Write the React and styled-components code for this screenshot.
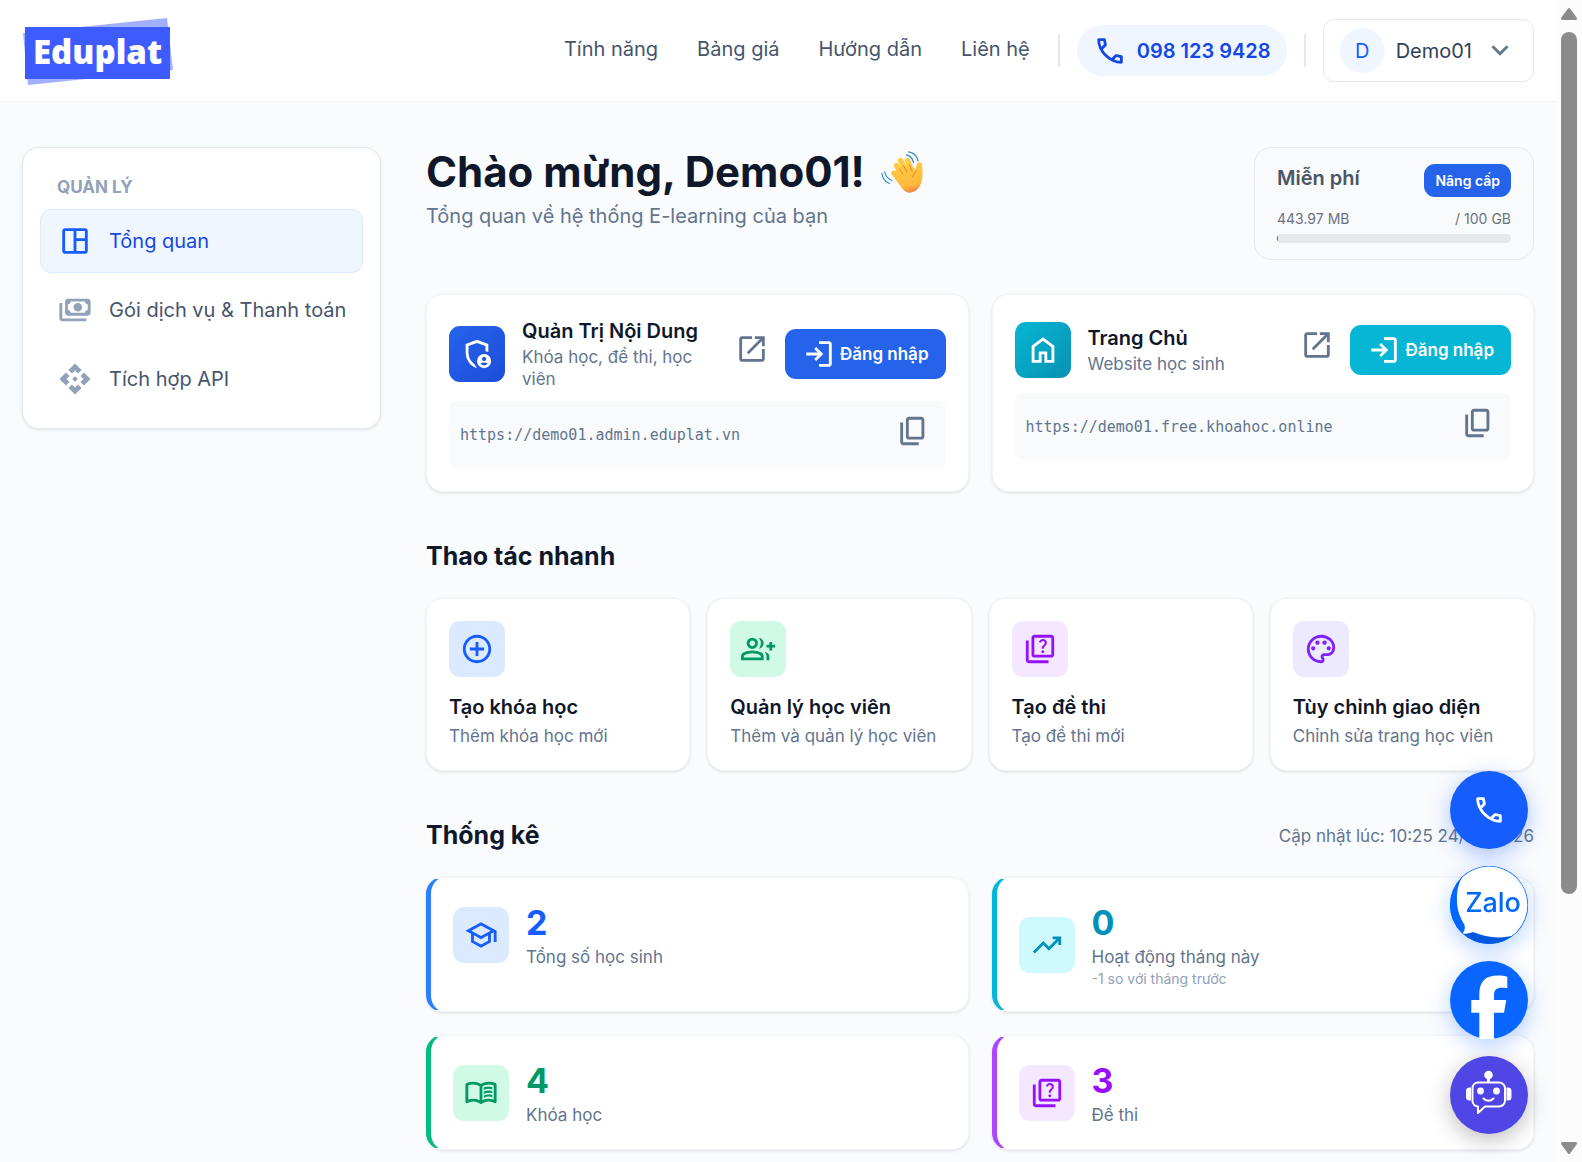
import React from 'react'
import styled, { createGlobalStyle } from 'styled-components'

const GlobalStyle = createGlobalStyle`
  * {
    box-sizing: border-box;
  }

  body {
    margin: 0;
    background: #fafbfd;
    color: #0f172b;
    font-family: Inter, 'Liberation Sans', sans-serif;
    font-size: 17px;
  }

  h1, h2, h3, p {
    margin: 0;
  }

  button {
    font-family: inherit;
    cursor: pointer;
    border: 0;
  }

  a {
    color: inherit;
    text-decoration: none;
  }
`

// Material Symbols outlines, all on the 960 grid
const paths = {
  call: 'M798-120q-125 0-247-54.5T329-329Q229-429 174.5-551T120-798q0-18 12-30t30-12h162q14 0 25 9.5t13 22.5l26 140q2 16-1 27t-11 19l-97 98q20 37 47.5 71.5T387-386q31 31 65 57.5t72 48.5l94-94q9-9 23.5-13.5T670-390l138 28q14 4 23 14.5t9 23.5v162q0 18-12 30t-30 12ZM241-600l66-66-17-94h-89q5 41 14 81t26 79Zm358 358q39 17 79.5 27t81.5 13v-88l-94-19-67 67Z',
  chevron: 'M480-344 240-584l56-56 184 184 184-184 56 56-240 240Z',
  dashboard:
    'M200-120q-33 0-56.5-23.5T120-200v-560q0-33 23.5-56.5T200-840h560q33 0 56.5 23.5T840-760v560q0 33-23.5 56.5T760-120H200Zm0-80h240v-560H200v560Zm320 0h240v-280H520v280Zm0-360h240v-200H520v200Z',
  payments:
    'M560-440q-50 0-85-35t-35-85q0-50 35-85t85-35q50 0 85 35t35 85q0 50-35 85t-85 35ZM280-320q-33 0-56.5-23.5T200-400v-320q0-33 23.5-56.5T280-800h560q33 0 56.5 23.5T920-720v320q0 33-23.5 56.5T840-320H280Zm80-80h400q0-33 23.5-56.5T840-480v-160q-33 0-56.5-23.5T760-720H360q0 33-23.5 56.5T280-640v160q33 0 56.5 23.5T360-400Zm440 240H120q-33 0-56.5-23.5T40-240v-440h80v440h680v80Z',
  api: 'm480-400-80-80 80-80 80 80-80 80Zm-85-235L295-735l185-185 185 185-100 100-85-85-85 85ZM225-295 40-480l185-185 100 100-85 85 85 85-100 100Zm510 0L635-395l85-85-85-85 100-100 185 185-185 185ZM480-40 295-225l100-100 85 85 85-85 100 100L480-40Z',
  admin:
    'M680-280q25 0 42.5-17.5T740-340q0-25-17.5-42.5T680-400q-25 0-42.5 17.5T620-340q0 25 17.5 42.5T680-280Zm0 120q31 0 57-14.5t44-38.5q-23-14-48.5-20.5T680-240q-27 0-52.5 6.5T579-213q18 24 44 38.5t57 14.5ZM480-80q-139-35-229.5-159.5T160-516v-244l320-120 320 120v227q-19-8-39-14.5t-41-9.5v-147l-240-90-240 90v188q0 47 12.5 94t35 89.5Q310-290 342-254t71 60q11 32 29 61t41 52q-1 0-1.5.5t-1.5.5Zm200 0q-83 0-141.5-58.5T480-280q0-83 58.5-141.5T680-480q83 0 141.5 58.5T880-280q0 83-58.5 141.5T680-80Z',
  home: 'M240-200h120v-240h240v240h120v-360L480-740 240-560v360Zm-80 80v-480l320-240 320 240v480H520v-240h-80v240H160Z',
  open: 'M200-120q-33 0-56.5-23.5T120-200v-560q0-33 23.5-56.5T200-840h280v80H200v560h560v-280h80v280q0 33-23.5 56.5T760-120H200Zm188-212-56-56 372-372H560v-80h280v280h-80v-144L388-332Z',
  login:
    'M480-120v-80h280v-560H480v-80h280q33 0 56.5 23.5T840-760v560q0 33-23.5 56.5T760-120H480Zm-80-160-55-58 102-102H120v-80h327L345-622l55-58 200 200-200 200Z',
  copy: 'M360-240q-33 0-56.5-23.5T280-320v-480q0-33 23.5-56.5T360-880h360q33 0 56.5 23.5T800-800v480q0 33-23.5 56.5T720-240H360Zm0-80h360v-480H360v480ZM200-80q-33 0-56.5-23.5T120-160v-560h80v560h440v80H200Z',
  add: 'M440-280h80v-160h160v-80H520v-160h-80v160H280v80h160v160Zm40 200q-83 0-156-31.5T197-197q-54-54-85.5-127T80-480q0-83 31.5-156T197-763q54-54 127-85.5T480-880q83 0 156 31.5T763-763q54 54 85.5 127T880-480q0 83-31.5 156T763-197q-54 54-127 85.5T480-80Zm0-80q134 0 227-93t93-227q0-134-93-227t-227-93q-134 0-227 93t-93 227q0 134 93 227t227 93Z',
  groupAdd:
    'M500-482q29-32 44.5-73t15.5-85q0-44-15.5-85T500-798q60 8 100 53t40 105q0 60-40 105t-100 53Zm220 322v-120q0-36-16-68.5T662-406q51 18 94.5 46.5T800-280v120h-80Zm80-280v-80h-80v-80h80v-80h80v80h80v80h-80v80h-80Zm-480-40q-66 0-113-47t-47-113q0-66 47-113t113-47q66 0 113 47t47 113q0 66-47 113t-113 47ZM0-160v-112q0-34 17.5-62.5T64-378q62-31 126-46.5T320-440q66 0 130 15.5T576-378q29 15 46.5 43.5T640-272v112H0Zm320-400q33 0 56.5-23.5T400-640q0-33-23.5-56.5T320-720q-33 0-56.5 23.5T240-640q0 33 23.5 56.5T320-560ZM80-240h480v-32q0-11-5.5-20T540-306q-54-27-109-40.5T320-360q-56 0-111 13.5T100-306q-9 5-14.5 14T80-272v32Z',
  quiz: 'M560-360q17 0 29.5-12.5T602-402q0-17-12.5-29.5T560-444q-17 0-29.5 12.5T518-402q0 17 12.5 29.5T560-360Zm-30-128h60q0-29 6-42.5t28-35.5q30-30 40-48.5t10-43.5q0-45-31.5-73.5T560-760q-41 0-71.5 23T446-676l54 22q9-25 24.5-37.5T560-704q24 0 39 13.5t15 36.5q0 14-8 26.5T578-596q-33 29-40.5 45.5T530-488ZM320-240q-33 0-56.5-23.5T240-320v-480q0-33 23.5-56.5T320-880h480q33 0 56.5 23.5T880-800v480q0 33-23.5 56.5T800-240H320Zm0-80h480v-480H320v480ZM160-80q-33 0-56.5-23.5T80-160v-560h80v560h560v80H160Z',
  palette:
    'M480-80q-82 0-155-31.5t-127.5-86Q143-252 111.5-325T80-480q0-83 32.5-156t88-127Q256-817 330-848.5T488-880q80 0 151 27.5t124.5 76q53.5 48.5 85 115T880-518q0 115-70 176.5T640-280h-74q-9 0-12.5 5t-3.5 11q0 12 15 34.5t15 51.5q0 50-27.5 74T480-80Zm-177-377q17-17 17-43t-17-43q-17-17-43-17t-43 17q-17 17-17 43t17 43q17 17 43 17t43-17Zm120-160q17-17 17-43t-17-43q-17-17-43-17t-43 17q-17 17-17 43t17 43q17 17 43 17t43-17Zm200 0q17-17 17-43t-17-43q-17-17-43-17t-43 17q-17 17-17 43t17 43q17 17 43 17t43-17Zm120 160q17-17 17-43t-17-43q-17-17-43-17t-43 17q-17 17-17 43t17 43q17 17 43 17t43-17ZM480-160q9 0 14.5-5t5.5-13q0-14-15-33t-15-57q0-42 29-67t71-25h70q66 0 113-38.5T800-518q0-121-92.5-201.5T488-800q-136 0-232 93t-96 227q0 133 93.5 226.5T480-160Z',
  school:
    'M480-120 200-272v-240L40-600l440-240 440 240v320h-80v-276l-80 44v240L480-120Zm0-332 274-148-274-148-274 148 274 148Zm0 241 200-108v-151L480-360 280-470v151l200 108Z',
  trending:
    'm136-240-56-56 296-298 160 160 208-206H640v-80h240v240h-80v-104L536-320 376-480 136-240Z',
  book: 'M560-564v-68q33-14 67.5-21t72.5-7q26 0 51 4t49 10v64q-24-9-48.5-13.5T700-600q-38 0-73 9.5T560-564Zm0 220v-68q33-14 67.5-21t72.5-7q26 0 51 4t49 10v64q-24-9-48.5-13.5T700-380q-38 0-73 9t-67 27Zm0-110v-68q33-14 67.5-21t72.5-7q26 0 51 4t49 10v64q-24-9-48.5-13.5T700-490q-38 0-73 9.5T560-454ZM260-320q47 0 91.5 10.5T440-278v-394q-41-24-87-36t-93-12q-36 0-71.5 7T120-692v396q35-12 69.5-18t70.5-6Zm260 42q44-21 88.5-31.5T700-320q36 0 70.5 6t69.5 18v-396q-33-14-68.5-21t-71.5-7q-47 0-93 12t-87 36v394Zm-40 118q-48-38-104-59t-116-21q-42 0-82.5 11T100-198q-21 11-40.5-1T40-234v-482q0-11 5.5-21T62-752q46-24 96-36t102-12q58 0 113.5 15T480-740q51-30 106.5-45T700-800q52 0 102 12t96 36q11 5 16.5 15t5.5 21v482q0 23-19.5 35t-40.5 1q-37-20-77.5-31T700-240q-60 0-116 21t-104 59Z',
}

const Svg = styled.svg`
  display: block;
  flex: none;
  fill: currentColor;
`

const Icon = ({ name }) => (
  <Svg width="34" height="34" viewBox="0 -960 960 960" aria-hidden="true">
    <path d={paths[name]} />
  </Svg>
)

const Shell = styled.div`
  display: grid;
  grid-template-columns: minmax(0, 1fr) 26px;
  min-height: 100vh;
`

const Header = styled.header`
  display: flex;
  align-items: center;
  justify-content: space-between;
  min-height: 102px;
  padding: 0 22px;
  background: #fff;
  border-bottom: 1px solid #f1f5f9;
`

const HomeLink = styled.a`
  display: flex;
`

const HeaderSide = styled.div`
  display: flex;
  align-items: center;
  gap: 17px;
`

const Nav = styled.nav`
  display: flex;
  gap: 39px;
  margin-right: 11px;
  color: #45556c;
  font-size: 20px;
  line-height: 28px;
  padding-bottom: 3px;
`

const Divider = styled.span`
  width: 2px;
  height: 33px;
  background: #e2e8f0;
`

const PhonePill = styled.a`
  display: flex;
  align-items: center;
  gap: 10px;
  height: 51px;
  padding: 0 16px;
  border-radius: 26px;
  background: #eff6ff;
  color: #1447e6;
  font-size: 20px;
  font-weight: 600;
`

const UserButton = styled.button`
  display: flex;
  align-items: center;
  gap: 11px;
  height: 63px;
  padding: 0 16px;
  border: 1px solid #e2e8f0;
  border-radius: 11px;
  background: #fff;
  color: #314158;
  font-size: 20px;

  svg {
    color: #62748e;
  }
`

const Avatar = styled.span`
  display: grid;
  place-items: center;
  width: 45px;
  height: 45px;
  border-radius: 50%;
  background: #eff6ff;
  color: #155dfc;
`

const Layout = styled.div`
  display: grid;
  grid-template-columns: 359px minmax(0, 1fr);
  align-items: start;
  gap: 45px;
  padding: 45px 22px 13px;
`

const Sidebar = styled.aside`
  padding: 17px;
  border: 1px solid #e2e8f0;
  border-radius: 17px;
  background: #fff;
  box-shadow: 0 1px 3px rgba(0, 0, 0, 0.1);
`

const SidebarTitle = styled.h2`
  padding: 11px 17px;
  color: #90a1b9;
  font-size: 17px;
  font-weight: 700;
  line-height: 22px;
`

const Menu = styled.nav`
  display: flex;
  flex-direction: column;
  gap: 5px;
`

const MenuItem = styled.a`
  display: flex;
  align-items: center;
  gap: 17px;
  height: 64px;
  padding: 0 17px;
  border: 1px solid ${({ $active }) => ($active ? '#dbeafe' : 'transparent')};
  border-radius: 11px;
  background: ${({ $active }) => ($active ? '#eff6ff' : 'transparent')};
  color: ${({ $active }) => ($active ? '#1447e6' : '#45556c')};
  font-size: 20px;
  white-space: nowrap;

  svg {
    color: ${({ $active }) => ($active ? '#155dfc' : '#90a1b9')};
  }
`

const Welcome = styled.div`
  display: flex;
  align-items: flex-start;
  justify-content: space-between;
  margin-bottom: 34px;
`

const Title = styled.h1`
  display: flex;
  align-items: center;
  gap: 16px;
  font-size: 42px;
  font-weight: 700;
  line-height: 50px;
`

const Subtitle = styled.p`
  margin-top: 5px;
  color: #62748e;
  font-size: 20px;
  line-height: 28px;
`

const Quota = styled.section`
  width: 280px;
  padding: 16px 22px;
  border: 1px solid #e5e7eb;
  border-radius: 17px;
  background: #f9fafb;
`

const QuotaRow = styled.div`
  display: flex;
  justify-content: space-between;
  color: #6a7282;
  font-size: 14px;
  line-height: 20px;
`

const PlanName = styled.h2`
  color: #4a5565;
  font-size: 20px;
  font-weight: 600;
  line-height: 28px;
`

const UpgradeButton = styled.button`
  height: 33px;
  margin-bottom: 12px;
  padding: 0 11px;
  border-radius: 11px;
  background: #2563eb;
  color: #fff;
  font-size: 14px;
  font-weight: 600;
`

const Bar = styled.div`
  height: 9px;
  margin-top: 5px;
  border-radius: 5px;
  background: #e5e7eb;
  overflow: hidden;
`

const BarFill = styled.div`
  height: 100%;
  background: #2563eb;
`

const Grid = styled.div`
  display: grid;
  grid-template-columns: repeat(${({ $columns }) => $columns}, minmax(0, 1fr));
  gap: ${({ $gap }) => $gap}px;
`

const Card = styled.article`
  padding: 22px;
  border: 1px solid #f1f5f9;
  border-radius: 17px;
  background: #fff;
  box-shadow: 0 1px 3px rgba(0, 0, 0, 0.12);
`

const Tile = styled.span`
  display: grid;
  place-items: center;
  flex: none;
  width: 56px;
  height: 56px;
  border-radius: 11px;
  background: ${({ $bg }) => $bg};
  color: ${({ $color }) => $color};
`

const SiteTop = styled.div`
  display: flex;
  align-items: center;
  gap: 17px;
  margin-bottom: 11px;
`

const SiteText = styled.div`
  display: flex;
  flex: 1;
  flex-direction: column;
  gap: 1px;
  min-width: 0;
`

const CardTitle = styled.h3`
  font-size: 20px;
  font-weight: 600;
  line-height: 28px;
`

const CardText = styled.p`
  color: #62748e;
  font-size: 17px;
  line-height: ${({ $line }) => $line || 24}px;
`

const SiteActions = styled.div`
  display: flex;
  align-items: center;
  gap: 11px;
`

const OpenLink = styled.a`
  padding: 11px 5px 20px;
  color: #62748e;
`

const LoginButton = styled.button`
  display: flex;
  align-items: center;
  gap: 4px;
  height: 50px;
  padding: 0 17px;
  border-radius: 11px;
  background: ${({ $bg }) => $bg};
  color: #fff;
  font-size: 17px;
  font-weight: 600;
  white-space: nowrap;
`

const UrlBox = styled.div`
  display: flex;
  align-items: center;
  justify-content: space-between;
  height: 67px;
  margin-bottom: 1px;
  padding: 0 11px;
  border-radius: 8px;
  background: #f8fafc;
`

const Url = styled.code`
  color: #62748e;
  font-family: 'DejaVu Sans Mono', monospace;
  font-size: 15px;
`

const CopyButton = styled.button`
  padding: 0 5px 8px;
  background: none;
  color: #62748e;
`

const SectionHead = styled.div`
  display: flex;
  align-items: center;
  justify-content: space-between;
  margin: 45px 0 22px;
`

const SectionTitle = styled.h2`
  font-size: 25px;
  font-weight: 700;
  line-height: 39px;
`

const QuickTitle = styled(CardTitle)`
  margin: 16px 0 3px;
`

const StatCard = styled(Card)`
  border-left: 5px solid ${({ $accent }) => $accent};
`

const StatRow = styled.div`
  display: flex;
  align-items: center;
  gap: 17px;
`

const StatValue = styled.p`
  color: ${({ $color }) => $color};
  font-size: 34px;
  font-weight: 700;
  line-height: 45px;
`

const StatNote = styled.p`
  color: #90a1b9;
  font-size: 14px;
  line-height: 20px;
`

const Contacts = styled.div`
  position: fixed;
  right: 54px;
  bottom: 28px;
  display: flex;
  flex-direction: column;
  gap: 17px;
`

const ContactLink = styled.a`
  display: grid;
  place-items: center;
  width: 78px;
  height: 78px;
  border-radius: 50%;
  background: ${({ $bg }) => $bg};
  box-shadow: 0 6px 22px ${({ $glow }) => $glow};
  color: #fff;
`

const Scrollbar = styled.div`
  position: sticky;
  top: 0;
  display: flex;
  flex-direction: column;
  gap: 12px;
  height: 100vh;
  padding: 8px 5px;
  background: #fcfcfc;
  color: #8b8b8b;
`

const Track = styled.div`
  flex: 1;
`

const Thumb = styled.div`
  height: 78.5%;
  border-radius: 8px;
  background: #8b8b8b;
`

const Logo = () => (
  <svg width="152" height="68" viewBox="22 16 152 68" role="img" aria-label="Eduplat">
    <path fill="#a3affb" d="M23 32 167 17l6 52-145 15z" />
    <path fill="#3e5bff" d="M25 26h145v52H25z" />
    <text x="33" y="63" fill="#fff" fontFamily="'Open Sans', sans-serif" fontSize="33" fontWeight="800">
      Eduplat
    </text>
  </svg>
)

const Wave = () => (
  <svg width="44" height="42" viewBox="0 0 44 42" role="img" aria-label="👋">
    <defs>
      <linearGradient id="skin" gradientUnits="userSpaceOnUse" x1="20" y1="6" x2="28" y2="42">
        <stop offset="0" stopColor="#ffcf45" />
        <stop offset="0.8" stopColor="#ffb83a" />
        <stop offset="1" stopColor="#f0804a" />
      </linearGradient>
    </defs>
    <g stroke="url(#skin)" strokeWidth="5.4" strokeLinecap="round" fill="none">
      <path d="M19 27 13 22" />
      <path d="M22 25 15.500 14.500" />
      <path d="M26 22 19.500 9.500" />
      <path d="M31 21 26.500 9.500" />
      <path d="M36 24q1-6 2.500-10" />
    </g>
    <path
      fill="url(#skin)"
      d="M11.500 24.500 17 17q9-5 16 0l2 3 6-6q1.500 12-1 18.500Q37 41 29 41.700q-5 0-9-6Z"
    />
    <path
      d="m18.500 18 3.500 5M22.500 14.500l3.500 6.500M28.500 14l2.500 6M36 19q-4 3-4.500 7"
      stroke="#e58a2c"
      strokeWidth="1"
      strokeLinecap="round"
      fill="none"
    />
    <path
      d="M25.500 4q5.500 1 7 7.500M27.500 .8q8 1.200 9.500 9M3.800 21q1 6 7 8.500M.9 22.500q1 7.500 7.500 10"
      stroke="#3b8fd0"
      strokeWidth="1.300"
      strokeLinecap="round"
      fill="none"
    />
  </svg>
)

const Zalo = () => (
  <svg width="78" height="78" viewBox="0 0 78 78" aria-hidden="true">
    <defs>
      <clipPath id="round">
        <circle cx="39" cy="39" r="38.400" />
      </clipPath>
    </defs>
    <circle cx="39" cy="39" r="39" fill="#0068ff" />
    <g clipPath="url(#round)">
      <path fill="#0059dd" d="M12 68q10-3 20 1 20 5 40-3v14H14z" />
      <path
        fill="#fff"
        d="M15 6C8 17 6.500 25 7 36c.5 10 3.500 16 7 22 2 4 0 8-2 10 4 0 8-1 11-2 14 6 28 7 43 3L80 60V-4H20Z"
      />
    </g>
    <text x="43" y="46" fill="#0068ff" fontFamily="Inter, sans-serif" fontSize="27" fontWeight="500" textAnchor="middle">
      Zalo
    </text>
  </svg>
)

const Facebook = () => (
  <svg width="78" height="78" viewBox="0 0 78 78" fill="#fff" aria-hidden="true">
    <path d="M29.300 78V51.700h-8V39h8v-5c0-13.500 5.700-19.500 18.700-19.500 3 0 7 .5 9.300 1.200V27c-1.300-.2-3.300-.3-5.300-.3-6 0-8 2.300-8 7.800V39h12.300L54 51.700H44V78Z" />
  </svg>
)

const Robot = () => (
  <svg width="78" height="78" viewBox="0 0 78 78" fill="#fff" aria-hidden="true">
    <circle cx="38.500" cy="19" r="4.300" />
    <path d="M37 22h3v5h-3zM21 31.500v13h-1.500a3.500 3.500 0 0 1-3.500-3.500v-6a3.500 3.500 0 0 1 3.500-3.500ZM56.500 31.500v13H58a3.500 3.500 0 0 0 3.500-3.500v-6a3.500 3.500 0 0 0-3.500-3.500Z" />
    <circle cx="30.500" cy="35" r="3.400" />
    <circle cx="46.500" cy="35" r="3.400" />
    <path
      d="M28 26.500h21a6 6 0 0 1 6 6v12a6 6 0 0 1-6 6H35l-7 6.500v-6.500a5.500 5.500 0 0 1-5.500-5.500V32a5.500 5.500 0 0 1 5.500-5.500ZM33.500 42.500q5 4.500 10 0"
      fill="none"
      stroke="#fff"
      strokeWidth="2"
      strokeLinejoin="round"
      strokeLinecap="round"
    />
  </svg>
)

const links = ['Tính năng', 'Bảng giá', 'Hướng dẫn', 'Liên hệ']

const menu = [
  { icon: 'dashboard', label: 'Tổng quan', active: true },
  { icon: 'payments', label: 'Gói dịch vụ & Thanh toán' },
  { icon: 'api', label: 'Tích hợp API' },
]

const sites = [
  {
    icon: 'admin',
    title: 'Quản Trị Nội Dung',
    text: 'Khóa học, đề thi, học viên',
    url: 'https://demo01.admin.eduplat.vn',
    bg: 'linear-gradient(135deg, #2563eb, #1d4ed8)',
    button: '#2563eb',
  },
  {
    icon: 'home',
    title: 'Trang Chủ',
    text: 'Website học sinh',
    url: 'https://demo01.free.khoahoc.online',
    bg: 'linear-gradient(135deg, #06b6d4, #0891b2)',
    button: '#06b6d4',
  },
]

const actions = [
  { icon: 'add', title: 'Tạo khóa học', text: 'Thêm khóa học mới', bg: '#dbeafe', color: '#155dfc' },
  { icon: 'groupAdd', title: 'Quản lý học viên', text: 'Thêm và quản lý học viên', bg: '#d0fae5', color: '#009966' },
  { icon: 'quiz', title: 'Tạo đề thi', text: 'Tạo đề thi mới', bg: '#f3e8ff', color: '#9810fa' },
  { icon: 'palette', title: 'Tùy chỉnh giao diện', text: 'Chỉnh sửa trang học viên', bg: '#ede9fe', color: '#7f22fe' },
]

const stats = [
  { icon: 'school', value: 2, label: 'Tổng số học sinh', accent: '#2b7fff', bg: '#dbeafe', color: '#155dfc' },
  {
    icon: 'trending',
    value: 0,
    label: 'Hoạt động tháng này',
    note: '-1 so với tháng trước',
    accent: '#00b8db',
    bg: '#cefafe',
    color: '#0092b8',
  },
  { icon: 'book', value: 4, label: 'Khóa học', accent: '#00bc7d', bg: '#d0fae5', color: '#009966' },
  { icon: 'quiz', value: 3, label: 'Đề thi', accent: '#ad46ff', bg: '#f3e8ff', color: '#9810fa' },
]

const TopBar = () => (
  <Header>
    <HomeLink href="#home">
      <Logo />
    </HomeLink>
    <HeaderSide>
      <Nav>
        {links.map(link => (
          <a key={link} href="#nav">
            {link}
          </a>
        ))}
      </Nav>
      <Divider />
      <PhonePill href="tel:0981239428">
        <Icon name="call" />
        098 123 9428
      </PhonePill>
      <Divider />
      <UserButton>
        <Avatar>D</Avatar>
        Demo01
        <Icon name="chevron" />
      </UserButton>
    </HeaderSide>
  </Header>
)

const StorageQuota = ({ usedMb, totalGb }) => (
  <Quota>
    <QuotaRow>
      <PlanName>Miễn phí</PlanName>
      <UpgradeButton>Nâng cấp</UpgradeButton>
    </QuotaRow>
    <QuotaRow>
      <span>{usedMb} MB</span>
      <span>/ {totalGb} GB</span>
    </QuotaRow>
    <Bar>
      <BarFill style={{ width: `${(usedMb / (totalGb * 1024)) * 100}%` }} />
    </Bar>
  </Quota>
)

const SiteCard = ({ site }) => (
  <Card>
    <SiteTop>
      <Tile $bg={site.bg} $color="#fff">
        <Icon name={site.icon} />
      </Tile>
      <SiteText>
        <CardTitle>{site.title}</CardTitle>
        <CardText $line={22}>{site.text}</CardText>
      </SiteText>
      <SiteActions>
        <OpenLink href={site.url} aria-label="Mở trang">
          <Icon name="open" />
        </OpenLink>
        <LoginButton $bg={site.button}>
          <Icon name="login" />
          Đăng nhập
        </LoginButton>
      </SiteActions>
    </SiteTop>
    <UrlBox>
      <Url>{site.url}</Url>
      <CopyButton aria-label="Sao chép">
        <Icon name="copy" />
      </CopyButton>
    </UrlBox>
  </Card>
)

const Stat = ({ stat }) => (
  <StatCard $accent={stat.accent}>
    <StatRow>
      <Tile $bg={stat.bg} $color={stat.color}>
        <Icon name={stat.icon} />
      </Tile>
      <div>
        <StatValue $color={stat.color}>{stat.value}</StatValue>
        <CardText>{stat.label}</CardText>
        {stat.note && <StatNote>{stat.note}</StatNote>}
      </div>
    </StatRow>
  </StatCard>
)

export default function App() {
  return (
    <Shell>
      <GlobalStyle />
      <div>
        <TopBar />
        <Layout>
          <Sidebar>
            <SidebarTitle>QUẢN LÝ</SidebarTitle>
            <Menu>
              {menu.map(item => (
                <MenuItem key={item.label} href="#menu" $active={item.active}>
                  <Icon name={item.icon} />
                  {item.label}
                </MenuItem>
              ))}
            </Menu>
          </Sidebar>
          <main>
            <Welcome>
              <div>
                <Title>
                  Chào mừng, Demo01!
                  <Wave />
                </Title>
                <Subtitle>Tổng quan về hệ thống E-learning của bạn</Subtitle>
              </div>
              <StorageQuota usedMb={443.97} totalGb={100} />
            </Welcome>
            <Grid $columns={2} $gap={23}>
              {sites.map(site => (
                <SiteCard key={site.url} site={site} />
              ))}
            </Grid>
            <SectionHead>
              <SectionTitle>Thao tác nhanh</SectionTitle>
            </SectionHead>
            <Grid $columns={4} $gap={17}>
              {actions.map(action => (
                <Card key={action.title}>
                  <Tile $bg={action.bg} $color={action.color}>
                    <Icon name={action.icon} />
                  </Tile>
                  <QuickTitle>{action.title}</QuickTitle>
                  <CardText>{action.text}</CardText>
                </Card>
              ))}
            </Grid>
            <SectionHead>
              <SectionTitle>Thống kê</SectionTitle>
              <CardText>Cập nhật lúc: 10:25 24/02/2026</CardText>
            </SectionHead>
            <Grid $columns={2} $gap={23}>
              {stats.map(stat => (
                <Stat key={stat.label} stat={stat} />
              ))}
            </Grid>
          </main>
        </Layout>
      </div>
      <Scrollbar>
        <Svg width="16" height="12" viewBox="0 0 16 12">
          <path d="M7 .5q1-1 2 0l7 9.500q0 2-1 2H1q-1 0-1-2z" />
        </Svg>
        <Track>
          <Thumb />
        </Track>
        <Svg width="16" height="12" viewBox="0 0 16 12">
          <path d="M7 11.500q1 1 2 0L16 2q0-2-1-2H1Q0 0 0 2z" />
        </Svg>
      </Scrollbar>
      <Contacts>
        <ContactLink href="tel:0981239428" aria-label="Gọi điện" $bg="#155dfc" $glow="rgba(21, 93, 252, 0.35)">
          <Icon name="call" />
        </ContactLink>
        <ContactLink href="#zalo" aria-label="Zalo" $bg="#0068ff" $glow="rgba(0, 104, 255, 0.3)">
          <Zalo />
        </ContactLink>
        <ContactLink href="#facebook" aria-label="Facebook" $bg="#0866ff" $glow="rgba(8, 102, 255, 0.3)">
          <Facebook />
        </ContactLink>
        <ContactLink href="#chat" aria-label="Trợ lý" $bg="#4f46e5" $glow="rgba(0, 0, 0, 0.25)">
          <Robot />
        </ContactLink>
      </Contacts>
    </Shell>
  )
}
